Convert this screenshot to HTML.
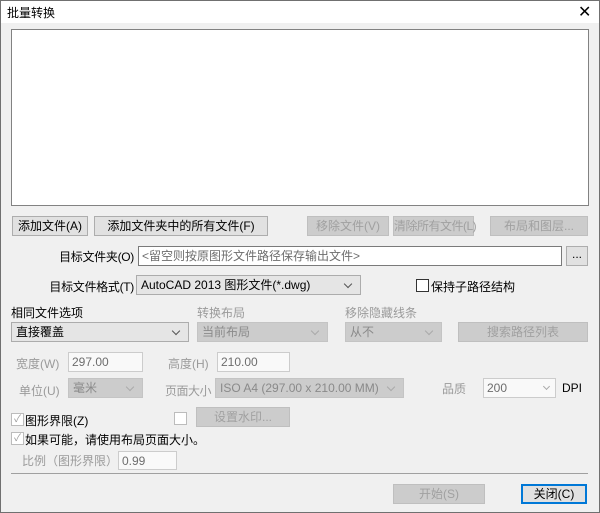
<!DOCTYPE html>
<html><head><meta charset="utf-8"><style>
*{box-sizing:border-box;margin:0;padding:0}
body{width:600px;height:513px;overflow:hidden;background:#f0f0f0;font-family:"Liberation Sans","Noto Sans CJK SC",sans-serif;font-size:12px;color:#000;position:relative}
.win{position:absolute;left:0;top:0;width:600px;height:513px;border:1px solid #707070}
.a{position:absolute;white-space:nowrap}
.r{position:absolute;white-space:nowrap;text-align:right;width:134px;left:0;letter-spacing:-0.3px}
.title{position:absolute;left:1px;top:1px;width:598px;height:22px;background:#fff}
.btn{position:absolute;background:#e1e1e1;border:1px solid #adadad;text-align:center;line-height:18px;white-space:nowrap}
.dis{color:#a0a0a0;background:#cccccc;border-color:#bfbfbf}
.inp{position:absolute;background:#fff;border:1px solid #7a7a7a;line-height:18px;padding-left:3px;white-space:nowrap}
.inp.d{border-color:#ccc;color:#6d6d6d;background:#f9f9f9}
.sel{position:absolute;background:#e5e5e5;border:1px solid #acacac;line-height:18px;padding-left:4px;white-space:nowrap}
.sel.d{background:#cccccc;border-color:#c4c4c4;color:#8a8a8a}
.sel::after{content:"";position:absolute;right:9px;top:5px;width:5px;height:5px;border-right:1px solid #555;border-bottom:1px solid #555;transform:rotate(45deg)}
.sel.d::after{border-color:#aaa}
.g{color:#9a9a9a}
.cb{position:absolute;width:13px;height:13px;border:1px solid #333;background:#fff}
.cb.d{border-color:#bcbcbc}
</style></head><body>
<div class="win"></div>
<div class="title"></div>
<div class="a" style="left:7px;top:4px;font-size:12px">批量转换</div>
<div class="a" style="left:578px;top:2px;font-size:16px">✕</div>
<div style="position:absolute;left:11px;top:29px;width:578px;height:177px;background:#fff;border:1px solid #828282"></div>

<div class="btn" style="left:12px;top:216px;width:76px;height:20px">添加文件(A)</div>
<div class="btn" style="left:94px;top:216px;width:174px;height:20px">添加文件夹中的所有文件(F)</div>
<div class="btn dis" style="left:307px;top:216px;width:82px;height:20px">移除文件(V)</div>
<div class="btn dis" style="left:393px;top:216px;width:81px;height:20px;letter-spacing:-0.5px">清除所有文件(L)</div>
<div class="btn dis" style="left:490px;top:216px;width:98px;height:20px">布局和图层...</div>

<div class="r" style="top:248px">目标文件夹(O)</div>
<div class="inp" style="left:138px;top:246px;width:424px;height:20px;color:#6d6d6d">&lt;留空则按原图形文件路径保存输出文件&gt;</div>
<div class="btn" style="left:566px;top:246px;width:22px;height:20px;line-height:14px">...</div>

<div class="r" style="top:278px">目标文件格式(T)</div>
<div class="sel" style="left:136px;top:275px;width:225px;height:20px">AutoCAD 2013 图形文件(*.dwg)</div>
<div class="cb" style="left:416px;top:279px"></div>
<div class="a" style="left:431px;top:278px">保持子路径结构</div>

<div class="a" style="left:11px;top:304px">相同文件选项</div>
<div class="a g" style="left:197px;top:304px">转换布局</div>
<div class="a g" style="left:345px;top:304px">移除隐藏线条</div>
<div class="sel" style="left:11px;top:322px;width:178px;height:20px">直接覆盖</div>
<div class="sel d" style="left:197px;top:322px;width:131px;height:20px">当前布局</div>
<div class="sel d" style="left:345px;top:322px;width:97px;height:20px">从不</div>
<div class="btn dis" style="left:458px;top:322px;width:130px;height:20px">搜索路径列表</div>

<div class="a g" style="left:16px;top:355px">宽度(W)</div>
<div class="inp d" style="left:68px;top:352px;width:75px;height:20px">297.00</div>
<div class="a g" style="left:168px;top:355px">高度(H)</div>
<div class="inp d" style="left:217px;top:352px;width:73px;height:20px">210.00</div>

<div class="a g" style="left:19px;top:382px">单位(U)</div>
<div class="sel d" style="left:68px;top:378px;width:75px;height:20px">毫米</div>
<div class="a g" style="left:165px;top:382px;letter-spacing:-0.5px">页面大小</div>
<div class="sel d" style="left:215px;top:378px;width:189px;height:20px">ISO A4 (297.00 x 210.00 MM)</div>
<div class="a g" style="left:442px;top:380px">品质</div>
<div class="inp d" style="left:483px;top:378px;width:73px;height:20px">200<span style="position:absolute;right:6px;top:5px;width:5px;height:5px;border-right:1px solid #aaa;border-bottom:1px solid #aaa;transform:rotate(45deg)"></span></div>
<div class="a" style="left:562px;top:381px">DPI</div>

<div class="cb d" style="left:11px;top:413px;font-size:10px;line-height:11px;color:#999;text-align:center">✓</div>
<div class="a" style="left:25px;top:412px">图形界限(Z)</div>
<div class="cb d" style="left:174px;top:412px"></div>
<div class="btn dis" style="left:196px;top:407px;width:94px;height:20px">设置水印...</div>

<div class="cb d" style="left:11px;top:432px;font-size:10px;line-height:11px;color:#999;text-align:center">✓</div>
<div class="a" style="left:25px;top:431px">如果可能，请使用布局页面大小。</div>

<div class="a g" style="left:22px;top:452px">比例（图形界限）</div>
<div class="inp d" style="left:118px;top:451px;width:59px;height:19px">0.99</div>

<div style="position:absolute;left:11px;top:473px;width:577px;height:1px;background:#a0a0a0"></div>
<div class="btn dis" style="left:393px;top:484px;width:92px;height:20px">开始(S)</div>
<div class="btn" style="left:521px;top:484px;width:66px;height:20px;border:2px solid #0078d7;line-height:16px">关闭(C)</div>
</body></html>
